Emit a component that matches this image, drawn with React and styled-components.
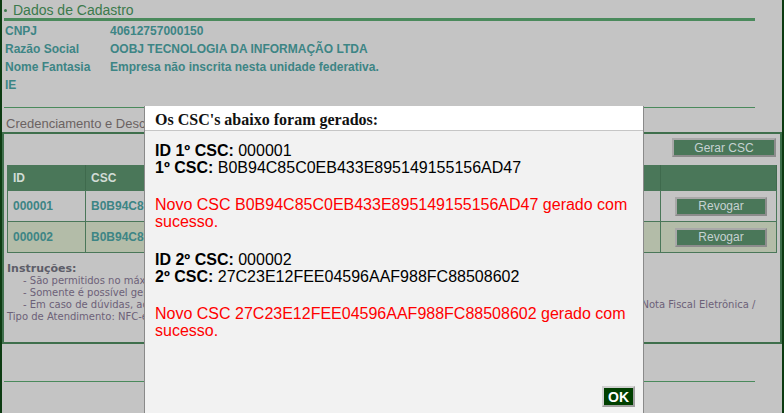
import React from "react";
import styled, { createGlobalStyle } from "styled-components";

var GlobalStyle = createGlobalStyle`
  html, body {
    margin: 0;
    padding: 0;
    background: #c4c4c4;
    overflow: hidden;
  }
`;

var Page = styled.div`
  position: relative;
  box-sizing: border-box;
  width: 784px;
  height: 413px;
  overflow: hidden;
  border-left: 2px solid #0d3b12;
  border-right: 2px solid #0d3b12;
  font-family: Arial, "Liberation Sans", sans-serif;
`;

var SectionTitle = styled.div`
  display: flex;
  align-items: center;
  height: 16px;
  padding-top: 2px;
  font-size: 14px;
  color: #3b7a4c;
`;

var Bullet = styled.span`
  width: 3px;
  height: 3px;
  margin: 0 6px 0 2px;
  border-radius: 50%;
  background: #3b7a4c;
`;

var Rule = styled.div`
  width: 751px;
  margin-left: 2px;
  height: ${(p) => p.$thick ? "3px" : "1px"};
  background: #4a8a5c;
`;

var InfoGrid = styled.div`
  display: grid;
  grid-template-columns: 105px 1fr;
  grid-auto-rows: 18px;
  padding: 1px 0 0 3px;
  height: 85px;
  font-size: 12px;
  font-weight: bold;
  color: #3d8585;
  line-height: 18px;
`;

var TabLabel = styled.div`
  height: 24px;
  padding: 8px 0 0 4px;
  box-sizing: border-box;
  font-size: 13px;
  line-height: 16px;
  color: #6b6262;
`;

var Box = styled.div`
  box-sizing: border-box;
  width: 780px;
  height: 212px;
  border: 2px solid #3f6f4c;
  padding: 4px 3px 0 3px;
`;

var Toolbar = styled.div`
  display: flex;
  justify-content: flex-end;
  padding-right: 1px;
  height: 23px;
`;

var GreenButton = styled.button`
  box-sizing: border-box;
  width: ${(p) => p.$w}px;
  height: 19px;
  padding: 0;
  background: #4a7759;
  border: 2px solid;
  border-color: #a8a8a8 #8c8c8c #8c8c8c #a8a8a8;
  color: #c6d2d2;
  font-family: Arial, "Liberation Sans", sans-serif;
  font-size: 12px;
`;

var Table = styled.table`
  width: 770px;
  margin-top: 4px;
  border-collapse: collapse;
  font-size: 12px;
  font-weight: bold;
`;

var HeadCell = styled.th`
  height: 24px;
  padding: 0 0 0 5px;
  text-align: left;
  background: #4a7759;
  color: #d2dcd6;
  border: 1px solid #4a7759;
  border-right-color: #3f6a4d;
`;

var Row = styled.tr`
  background: ${(p) => p.$alt ? "#b3bca8" : "#c4c4c4"};
`;

var Cell = styled.td`
  height: 30px;
  padding: 0 0 0 5px;
  border: 1px solid #4a7759;
  color: #3d8585;
  white-space: nowrap;
  text-align: ${(p) => p.$center ? "center" : "left"};
`;

var Instructions = styled.div`
  padding: 9px 0 0 0;
  font-family: "DejaVu Sans", Verdana, sans-serif;
  font-size: 10px;
  line-height: 12px;
  color: #6c6178;
  white-space: nowrap;
`;

var InstrTitle = styled.div`
  font-size: 11px;
  font-weight: bold;
  color: #5d5d68;
  line-height: 13px;
`;

var InstrItem = styled.div`
  padding-left: ${(p) => p.$indent ? "16px" : "0"};
`;

var Spacer = styled.div`
  height: ${(p) => p.$h}px;
`;

var Modal = styled.div`
  position: absolute;
  left: 142px;
  top: 106px;
  box-sizing: border-box;
  width: 500px;
  height: 330px;
  background: #f2f2f2;
  border-left: 1px solid #8a8a8a;
  border-right: 1px solid #8a8a8a;
`;

var ModalTitle = styled.div`
  box-sizing: border-box;
  height: 25px;
  padding: 5px 0 0 10px;
  background: #ffffff;
  border-bottom: 1px solid #c6c6c6;
  font-family: "Liberation Serif", "Times New Roman", serif;
  font-size: 16px;
  font-weight: bold;
  line-height: 18px;
  color: #111;
`;

var ModalBody = styled.div`
  padding: 10.5px 8px 0 10px;
  font-family: Arial, "Liberation Sans", sans-serif;
  font-size: 16px;
  line-height: 17px;
  color: #000;
`;

var Block = styled.div`
  color: ${(p) => p.$error ? "#ff0000" : "#000"};
  margin-bottom: 20.5px;
`;

var Footer = styled.div`
  display: flex;
  justify-content: flex-end;
  padding-top: 26.5px;
`;

var OkButton = styled.button`
  box-sizing: border-box;
  width: 33px;
  height: 21px;
  padding: 0;
  background: #003f00;
  border: 2px solid;
  border-color: #d0d0d0 #a0a0a0 #a0a0a0 #d0d0d0;
  color: #ffffff;
  font-family: Arial, "Liberation Sans", sans-serif;
  font-size: 14px;
  font-weight: bold;
`;

var cscs = [
  { id: "000001", csc: "B0B94C85C0EB433E895149155156AD47" },
  { id: "000002", csc: "27C23E12FEE04596AAF988FC88508602" },
];

var tableRows = [
  { id: "000001", csc: "B0B94C85C0EB433E895149155156AD47" },
  { id: "000002", csc: "B0B94C85C0EB433E895149155156AD47" },
];

export default function App() {
  return (
    <Page>
      <GlobalStyle />
      <SectionTitle>
        <Bullet />
        Dados de Cadastro
      </SectionTitle>
      <Rule $thick />
      <InfoGrid>
        <span>CNPJ</span>
        <span>40612757000150</span>
        <span>Razão Social</span>
        <span>OOBJ TECNOLOGIA DA INFORMAÇÃO LTDA</span>
        <span>Nome Fantasia</span>
        <span>Empresa não inscrita nesta unidade federativa.</span>
        <span>IE</span>
        <span></span>
      </InfoGrid>
      <Rule />
      <TabLabel>Credenciamento e Descredenciamento de CSC</TabLabel>
      <Box>
        <Toolbar>
          <GreenButton $w={104}>Gerar CSC</GreenButton>
        </Toolbar>
        <Table>
          <thead>
            <tr>
              <HeadCell style={{ width: 72 }}>ID</HeadCell>
              <HeadCell>CSC</HeadCell>
              <HeadCell style={{ width: 110 }}></HeadCell>
            </tr>
          </thead>
          <tbody>
            {tableRows.map((c, i) => (
              <Row key={c.id} $alt={i === 1}>
                <Cell>{c.id}</Cell>
                <Cell>{c.csc}</Cell>
                <Cell $center>
                  <GreenButton $w={92}>Revogar</GreenButton>
                </Cell>
              </Row>
            ))}
          </tbody>
        </Table>
        <Instructions>
          <InstrTitle>Instruções:</InstrTitle>
          <InstrItem $indent>- São permitidos no máximo 2 (dois) CSC ativos por contribuinte.</InstrItem>
          <InstrItem $indent>- Somente é possível gerar um novo CSC após revogar um dos CSC ativos.</InstrItem>
          <InstrItem $indent>- Em caso de dúvidas, acesse o portal da Secretaria da Fazenda, pelo menu Fale Conosco, e selecione a opção de Assunto: Nota Fiscal Eletrônica /</InstrItem>
          <InstrItem>Tipo de Atendimento: NFC-e.</InstrItem>
        </Instructions>
      </Box>
      <Spacer $h={37} />
      <Rule />
      <Modal>
        <ModalTitle>Os CSC's abaixo foram gerados:</ModalTitle>
        <ModalBody>
          {cscs.map((c, i) => (
            <React.Fragment key={c.id}>
              <Block>
                <b>ID {i + 1}º CSC:</b> {c.id}
                <br />
                <b>{i + 1}º CSC:</b> {c.csc}
              </Block>
              <Block $error>Novo CSC {c.csc} gerado com sucesso.</Block>
            </React.Fragment>
          ))}
          <Footer>
            <OkButton>OK</OkButton>
          </Footer>
        </ModalBody>
      </Modal>
    </Page>
  );
}
